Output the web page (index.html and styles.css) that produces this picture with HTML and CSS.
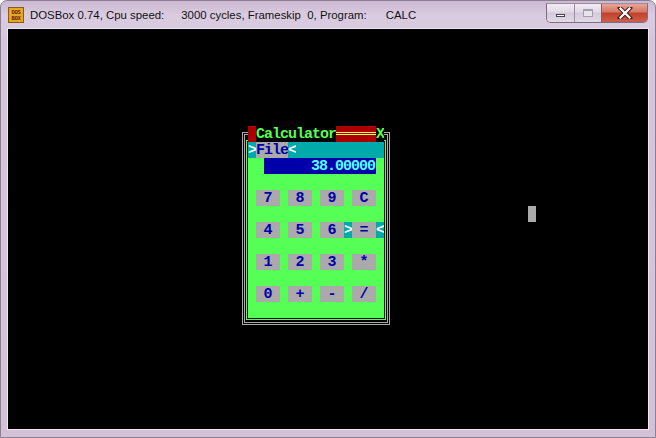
FILE: index.html
```html
<!DOCTYPE html>
<html>
<head>
<meta charset="utf-8">
<title>DOSBox</title>
<link rel="stylesheet" href="styles.css">
</head>
<body>
<div class="win">
  <div class="titlebar">
    <div class="app-icon"><span>DOS</span><span>BOX</span></div>
    <div class="title">
      <span class="t1">DOSBox 0.74, Cpu speed:</span>
      <span class="t2">3000 cycles, Frameskip  0, Program:</span>
      <span class="t3">CALC</span>
    </div>
    <div class="caption">
      <div class="cbtn min"><i></i></div>
      <div class="cbtn max"><i></i></div>
      <div class="cbtn close">
        <svg width="16" height="12" viewBox="0 0 16 12"><path d="M3 1 L13 11 M13 1 L3 11" stroke="#3a2020" stroke-width="4.2" stroke-linecap="square"/><path d="M3.5 1.5 L12.5 10.5 M12.5 1.5 L3.5 10.5" stroke="#fff" stroke-width="2.2" stroke-linecap="square"/></svg>
      </div>
    </div>
  </div>
  <div class="client">
    <div class="screen">
      <div class="calc">
        <div class="frame"></div>
        <div class="body"></div>
        <div class="tl-red"></div>
        <div class="tl-text">Calculator</div>
        <div class="tl-bar"></div>
        <div class="tl-x">X</div>
        <div class="menubar"><span class="sel">&gt;</span><span class="menu-item">File</span><span class="sel">&lt;</span></div>
        <div class="display">38.00000</div>
        <div class="pad">
          <div class="row"><span class="key">7</span><span class="key">8</span><span class="key">9</span><span class="key">C</span></div>
          <div class="row"><span class="key">4</span><span class="key">5</span><span class="key">6</span><span class="focus"><span class="sel">&gt;</span><span class="key">=</span><span class="sel">&lt;</span></span></div>
          <div class="row"><span class="key">1</span><span class="key">2</span><span class="key">3</span><span class="key">*</span></div>
          <div class="row"><span class="key">0</span><span class="key">+</span><span class="key">-</span><span class="key">/</span></div>
        </div>
      </div>
      <div class="cursor"></div>
    </div>
  </div>
</div>
</body>
</html>
```

FILE: styles.css
```css
html, body {
  margin: 0;
  padding: 0;
  background: #ffffff;
}
body {
  width: 656px;
  height: 438px;
  overflow: hidden;
  font-family: "Liberation Sans", Arial, sans-serif;
}
.win {
  width: 656px;
  height: 438px;
  box-sizing: border-box;
  border: 1px solid #8d7f93;
  border-radius: 7px 7px 0 0;
  background: linear-gradient(#cbb8d1 0px, #dacce0 14px, #d6c6db 40px, #d3c1d8 100%);
  padding: 0 7px 8px 7px;
  display: flex;
  flex-direction: column;
}
.titlebar {
  height: 28px;
  display: flex;
  align-items: flex-start;
}
.app-icon {
  width: 16px;
  height: 16px;
  margin-top: 6px;
  box-sizing: border-box;
  background: #e6a722;
  border: 1px solid #8a5a10;
  display: flex;
  flex-direction: column;
  align-items: center;
  justify-content: center;
  font-family: "DejaVu Sans Mono", monospace;
  font-size: 5.5px;
  line-height: 6px;
  font-weight: bold;
  color: #6a1a10;
  letter-spacing: -0.3px;
}
.title {
  margin-left: 6px;
  margin-top: 7px;
  font-size: 11.4px;
  line-height: 15px;
  color: #111;
  white-space: pre;
  display: flex;
}
.t2 { margin-left: 17px; }
.t3 { margin-left: 19px; }
.caption {
  margin-left: auto;
  margin-top: 2px;
  height: 18px;
  display: flex;
  border: 1px solid #7b6f81;
  border-top-color: #9a8da0;
  border-radius: 0 0 5px 5px;
  overflow: hidden;
}
.cbtn {
  height: 18px;
  display: flex;
  align-items: center;
  justify-content: center;
  background: linear-gradient(#f1ecf3, #e2d9e6 45%, #d3c8d9 50%, #e2dae6);
}
.min { width: 27px; border-right: 1px solid #9a8ea0; }
.max { width: 26px; border-right: 1px solid #8c5c5c; }
.close {
  width: 45px;
  background: linear-gradient(#e6a596, #d77564 45%, #c2402c 50%, #cf5f49 100%);
}
.min i {
  display: block;
  width: 9px;
  height: 3px;
  margin-top: 5px;
  box-sizing: border-box;
  border: 1px solid #4a4250;
  background: #fff;
}
.max i {
  display: block;
  width: 10px;
  height: 8px;
  box-sizing: border-box;
  border: 1px solid #a79eab;
  border-top-width: 2px;
  background: #e9e3ec;
}
.client {
  width: 640px;
  height: 400px;
  box-shadow: 0 0 0 1px #efe7f2;
}
.screen {
  width: 640px;
  height: 400px;
  box-sizing: border-box;
  padding-top: 1px;
  overflow: hidden;
  background: #000;
  display: grid;
  grid-template-columns: repeat(80, 8px);
  grid-template-rows: repeat(25, 16px);
  font-family: "Liberation Mono", "DejaVu Sans Mono", monospace;
  font-size: 15px;
  line-height: 18px;
  letter-spacing: -1px;
  font-weight: bold;
}
.cursor {
  grid-column: 66;
  grid-row: 12;
  background: #aaaaaa;
}
.calc {
  grid-column: 30 / 49;
  grid-row: 7 / 20;
  display: grid;
  grid-template-columns: repeat(19, 8px);
  grid-template-rows: repeat(13, 16px);
}
.frame {
  grid-column: 1 / -1;
  grid-row: 1 / -1;
  margin: 6px 2px 9px 2px;
  border: 3px double #aaaaaa;
}
.body {
  grid-column: 2 / 19;
  grid-row: 2 / 13;
  background: #55ff55;
  box-shadow: 0 0 0 1px #000, 0 0 0 2px #55ff55;
}
.tl-red {
  grid-column: 2;
  grid-row: 1;
  background: #aa0000;
}
.tl-text {
  grid-column: 3 / 13;
  grid-row: 1;
  background: #000;
  color: #55ff55;
  white-space: pre;
  overflow: hidden;
}
.tl-bar {
  grid-column: 13 / 18;
  grid-row: 1;
  background: linear-gradient(#aa0000 0 6px, #ffff55 6px 7px, #aa0000 7px 8px, #ffff55 8px 9px, #aa0000 9px);
}
.tl-x {
  grid-column: 18;
  grid-row: 1;
  background: #000;
  color: #55ff55;
  text-align: center;
  letter-spacing: 0;
  overflow: hidden;
}
.menubar {
  grid-column: 2 / 19;
  grid-row: 2;
  background: #00aaaa;
  display: flex;
  overflow: hidden;
}
.sel {
  width: 8px;
  flex: none;
  background: #00aaaa;
  color: #ffffff;
  text-align: center;
  letter-spacing: 0;
  overflow: hidden;
}
.menu-item {
  width: 32px;
  flex: none;
  background: #aaaaaa;
  color: #0000aa;
  overflow: hidden;
}
.display {
  grid-column: 4 / 18;
  grid-row: 3;
  background: #0000aa;
  color: #55ffff;
  text-align: right;
  padding-right: 1px;
  overflow: hidden;
}
.pad {
  grid-column: 3 / 19;
  grid-row: 5 / 12;
  display: flex;
  flex-direction: column;
  gap: 16px;
}
.row {
  display: flex;
  gap: 8px;
  height: 16px;
}
.key {
  width: 24px;
  height: 16px;
  flex: none;
  background: #aaaaaa;
  color: #0000aa;
  text-align: center;
  letter-spacing: 0;
  overflow: hidden;
}
.focus {
  display: flex;
  margin: 0 -8px;
}
```
